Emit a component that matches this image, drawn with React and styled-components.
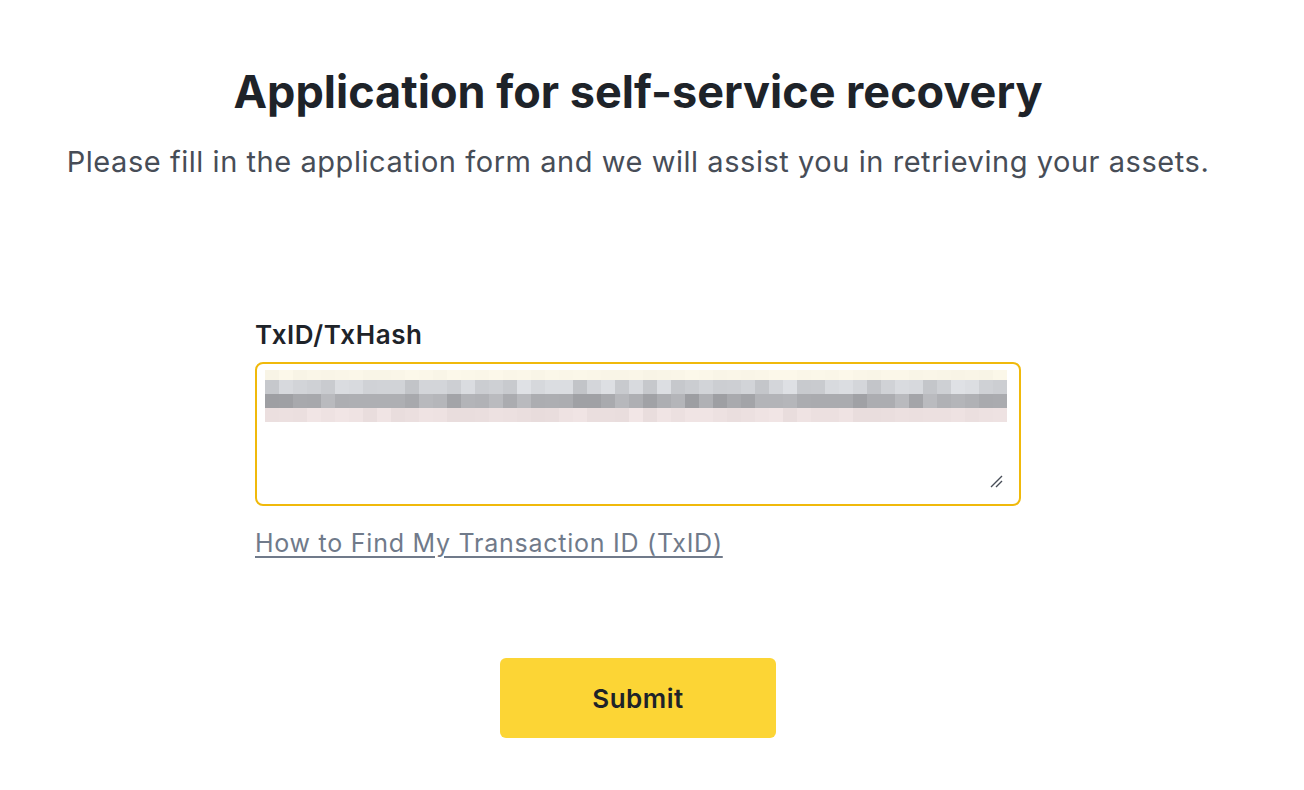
import styled, { createGlobalStyle } from 'styled-components'

const GlobalStyle = createGlobalStyle`
    body {
        margin: 0;
        background: #fff;
        font-family: "Inter", "Liberation Sans", sans-serif;
        color: #1E2329;
    }
`

// pixelated (blurred) txid preview, rows of grey blocks
const ROWS = [
    { y: 6, h: 10, base: [250, 246, 232], spread: 4 },
    { y: 16, h: 14, base: [208, 210, 214], spread: 30 },
    { y: 30, h: 14, base: [172, 173, 177], spread: 30 },
    { y: 44, h: 14, base: [237, 225, 225], spread: 10 },
]

const shade = (i, r, spread) => {
    const n = Math.sin(i * 12.9898 + r * 78.233) * 43758.5453
    return (n - Math.floor(n) - 0.5) * spread
}

const Mosaic = () => {
    const cells = []
    ROWS.forEach((row, r) => {
        for (let i = 0; i < 53; i++) {
            const d = shade(i, r, row.spread)
            const c = row.base.map(v => Math.max(0, Math.min(255, Math.round(v + d))))
            cells.push(
                <rect key={`${r}-${i}`} x={8 + i * 14} y={row.y} width="14" height={row.h}
                    fill={`rgb(${c.join(',')})`} />
            )
        }
    })
    return (
        <svg width="760" height="62" viewBox="0 0 760 62">
            {cells}
        </svg>
    )
}

const App = () => {
    return (
        <Page>
            <GlobalStyle />
            <Title>Application for self-service recovery</Title>
            <Subtitle>Please fill in the application form and we will assist you in retrieving your assets.</Subtitle>
            <Form>
                <Label>TxID/TxHash</Label>
                <Field>
                    <Mosaic />
                    <Grip width="14" height="14" viewBox="0 0 14 14">
                        <path d="M2 13 L13 2 M7 13 L13 7" stroke="#474D57" strokeWidth="1.4" />
                    </Grip>
                </Field>
                <HelpLink href="#">How to Find My Transaction ID (TxID)</HelpLink>
            </Form>
            <SubmitButton>Submit</SubmitButton>
        </Page>
    )
}

export default App

// STYLES
const Page = styled.div`
    width: 1276px;
    display: flex;
    flex-direction: column;
    align-items: center;
    padding-top: 64px;
`

const Title = styled.h1`
    margin: 0;
    font-size: 45px;
    line-height: 56px;
    font-weight: 700;
    color: #1E2329;
`

const Subtitle = styled.p`
    margin: 22px 0 0;
    font-size: 29px;
    line-height: 40px;
    letter-spacing: 0.55px;
    color: #474D57;
`

const Form = styled.div`
    width: 766px;
    margin-top: 137px;
    display: flex;
    flex-direction: column;
`

const Label = styled.label`
    font-size: 26px;
    line-height: 32px;
    font-weight: 600;
    letter-spacing: 0.6px;
    color: #1E2329;
    margin-bottom: 11px;
`

const Field = styled.div`
    position: relative;
    box-sizing: border-box;
    height: 144px;
    border: 2px solid #F0B90B;
    border-radius: 8px;

    svg:first-child {
        display: block;
    }
`

const Grip = styled.svg`
    position: absolute;
    right: 16px;
    bottom: 16px;
`

const HelpLink = styled.a`
    margin-top: 21px;
    align-self: flex-start;
    font-size: 25px;
    line-height: 32px;
    letter-spacing: 0.75px;
    color: #707A8A;
    text-decoration: underline;
    text-underline-offset: 4px;
`

const SubmitButton = styled.button`
    margin-top: 99px;
    width: 276px;
    height: 80px;
    border: none;
    border-radius: 6px;
    background: #FCD535;
    font-family: inherit;
    font-size: 26px;
    font-weight: 600;
    letter-spacing: 0.5px;
    color: #1E2329;
    cursor: pointer;
`
